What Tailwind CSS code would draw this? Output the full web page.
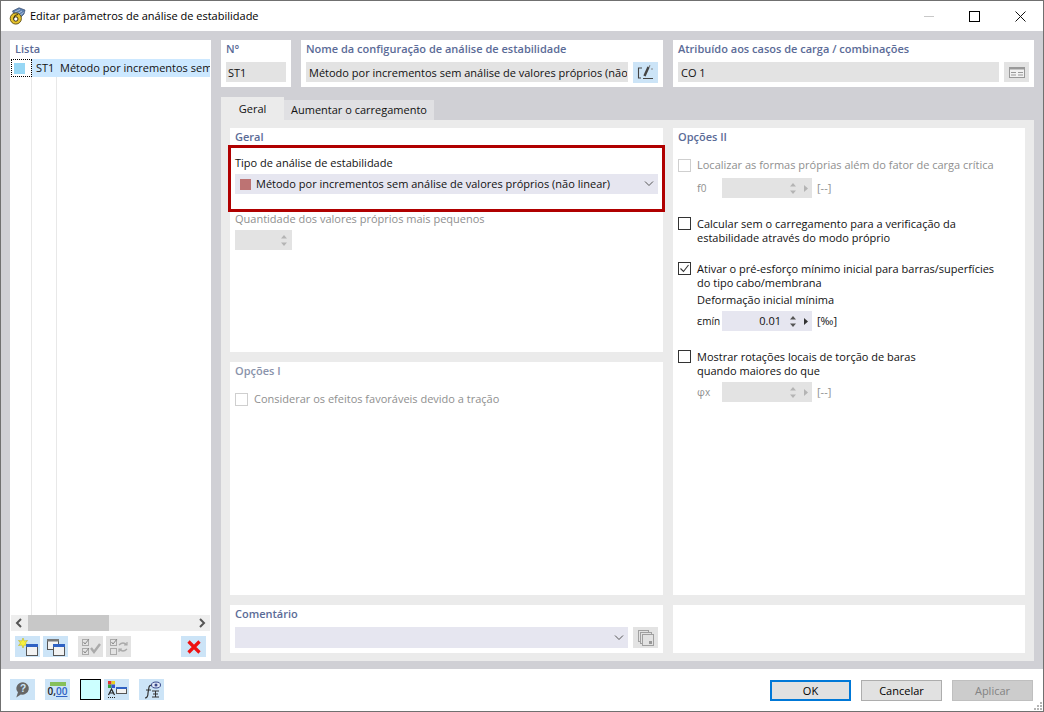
<!DOCTYPE html>
<html lang="pt">
<head>
<meta charset="UTF-8">
<title>Editar parâmetros de análise de estabilidade</title>
<script src="https://cdn.jsdelivr.net/npm/@tailwindcss/browser@4"></script>
</head>
<body class="w-[1044px] h-[712px] overflow-hidden bg-white">
<div class="relative w-[1044px] h-[712px] border border-[#707070] flex flex-col font-['Open_Sans',sans-serif] text-[11px] leading-[14px] text-[#111]">

  <!-- barra de titulo -->
  <div class="h-[30px] flex items-center bg-white shrink-0">
    <svg class="ml-[8px] w-[17px] h-[18px]" viewBox="0 0 17 18">
      <path d="M5 7 L3.5 4 L10 .8 L16 3 L15 7 L11 11 Z" fill="#5c7fae" stroke="#3c4f70" stroke-width=".7"/>
      <path d="M6 5 L11 2.5 M8 7 L13 4 M10 9 L14.5 5.5" stroke="#c8d6ea" stroke-width=".8"/>
      <circle cx="6.8" cy="11.5" r="5.6" fill="#e5c22c" stroke="#5a4a10" stroke-width=".9"/>
      <circle cx="6.8" cy="12" r="2.2" fill="#fff" stroke="#3a3010" stroke-width="1"/>
      <path d="M4.6 11.5 Q5 7.5 9 7.5" fill="none" stroke="#3a3010" stroke-width="1"/>
    </svg>
    <span class="ml-[4px] text-black">Editar parâmetros de análise de estabilidade</span>
    <div class="ml-auto flex items-center">
      <div class="w-[10px] h-px bg-[#c8c8c8] mr-[35px]"></div>
      <div class="w-[11px] h-[11px] border border-black mr-[35px]"></div>
      <svg class="w-[11px] h-[11px] mr-[17px]" viewBox="0 0 11 11"><path d="M.5 .5 L10.5 10.5 M10.5 .5 L.5 10.5" stroke="#111" stroke-width="1"/></svg>
    </div>
  </div>

  <!-- corpo -->
  <div class="h-[638px] shrink-0 bg-[#d0d0d5] pl-[9px] pr-[9px] pt-[9px] pb-[8px] flex gap-[10px]">

    <!-- lista -->
    <div class="w-[201px] bg-white flex flex-col shrink-0">
      <div class="h-[19px] pl-[5px] pt-[2px] font-semibold text-[#5b6b97]">Lista</div>
      <div class="h-[556px] relative overflow-hidden">
        <div class="absolute left-[21px] top-0 bottom-0 w-px bg-[#e8e8e8]"></div>
        <div class="absolute left-[46px] top-0 bottom-0 w-px bg-[#e8e8e8]"></div>
        <div class="relative flex h-[18px] ml-px w-[199px]">
          <div class="w-[21px] h-[18px] border border-dotted border-black flex items-center pl-[2px]">
            <div class="w-[11px] h-[11px] bg-[#97d7f5]"></div>
          </div>
          <div class="flex-1 bg-[#cce8ff] flex items-center whitespace-nowrap overflow-hidden">
            <span class="ml-[4px] w-[24px] shrink-0">ST1</span>
            <span>Método por incrementos sem análise de valores próprios (não linear)</span>
          </div>
        </div>
      </div>
      <div class="h-[16px] mx-px bg-[#eeeeee] flex items-center">
        <svg class="w-[17px] h-[16px]" viewBox="0 0 17 16"><path d="M10 4 L6 8 L10 12" fill="none" stroke="#555" stroke-width="2"/></svg>
        <div class="w-[81px] h-[16px] bg-[#c8c8c8]"></div>
        <svg class="ml-auto w-[17px] h-[16px]" viewBox="0 0 17 16"><path d="M7 4 L11 8 L7 12" fill="none" stroke="#555" stroke-width="2"/></svg>
      </div>
      <div class="flex items-center pl-[5px] pt-[5px]">
        <div class="w-[25px] h-[21px] bg-[#cce4f7] flex items-center justify-center">
          <svg class="w-[20px] h-[18px]" viewBox="0 0 20 18"><path d="M5 0 L6.2 3 L9.5 2.5 L7.5 5 L9.5 7.5 L6.2 7 L5 10 L3.8 7 L.5 7.5 L2.5 5 L.5 2.5 L3.8 3 Z" fill="#f6f040" stroke="#b8a800" stroke-width=".5"/><rect x="8.5" y="6.5" width="11" height="11" fill="#f2f2f2" stroke="#555"/><rect x="8" y="6" width="12" height="3" fill="#2f62c4"/></svg>
        </div>
        <div class="ml-[3px] w-[25px] h-[21px] bg-[#cce4f7] flex items-center justify-center">
          <svg class="w-[20px] h-[18px]" viewBox="0 0 20 18"><rect x="1.5" y="1.5" width="11" height="10" fill="#f2f2f2" stroke="#555"/><rect x="1" y="1" width="12" height="2.5" fill="#777"/><rect x="7.5" y="6.5" width="11" height="11" fill="#f2f2f2" stroke="#555"/><rect x="7" y="6" width="12" height="3" fill="#2f62c4"/></svg>
        </div>
        <div class="ml-[10px] w-[25px] h-[21px] bg-[#e3e3e3] flex items-center justify-center">
          <svg class="w-[20px] h-[18px]" viewBox="0 0 20 18"><rect x="1.5" y="1.5" width="6" height="6" fill="none" stroke="#aaa"/><rect x="1.5" y="10.5" width="6" height="6" fill="none" stroke="#aaa"/><path d="M2.5 4 L4 6 L8 1 M2.5 13 L4 15 L8 10" fill="none" stroke="#888"/><path d="M10 10 L13 14 L19 6" fill="none" stroke="#aaa" stroke-width="2.4"/></svg>
        </div>
        <div class="ml-[3px] w-[25px] h-[21px] bg-[#e3e3e3] flex items-center justify-center">
          <svg class="w-[20px] h-[18px]" viewBox="0 0 20 18"><rect x="1.5" y="1.5" width="6" height="6" fill="none" stroke="#aaa"/><rect x="1.5" y="10.5" width="6" height="6" fill="none" stroke="#aaa"/><path d="M2.5 4 L4 6 L8 1" fill="none" stroke="#888"/><path d="M10 7 Q14 3 18 7 M18 4 V7 H15 M18 11 Q14 15 10 11 M10 14 V11 H13" fill="none" stroke="#aaa" stroke-width="1.2"/></svg>
        </div>
        <div class="ml-[50px] w-[25px] h-[21px] bg-[#cce4f7] flex items-center justify-center">
          <svg class="w-[14px] h-[14px]" viewBox="0 0 14 14"><path d="M1.5 1.5 L12.5 12.5 M12.5 1.5 L1.5 12.5" stroke="#ee1111" stroke-width="3.2"/></svg>
        </div>
      </div>
    </div>

    <!-- lado direito -->
    <div class="flex-1 flex flex-col">
      <div class="flex gap-[10px] h-[47px]">
        <div class="w-[70px] bg-white px-[5px] pt-[2px]">
          <div class="h-[20px] font-semibold text-[#5b6b97]">N°</div>
          <div class="h-[20px] bg-[#e3e3e3] flex items-center pl-[2px] pt-[2px]">ST1</div>
        </div>
        <div class="w-[362px] bg-white px-[5px] pt-[2px]">
          <div class="h-[20px] font-semibold text-[#5b6b97] whitespace-nowrap">Nome da configuração de análise de estabilidade</div>
          <div class="flex gap-[5px]">
            <div class="w-[322px] h-[20px] bg-[#e3e3e3] flex items-center pl-[3px] pt-[2px] overflow-hidden whitespace-nowrap"><span class="block w-[318px] overflow-hidden">Método por incrementos sem análise de valores próprios (não linear)</span></div>
            <div class="w-[25px] h-[21px] bg-[#cce4f7] flex items-center justify-center">
              <svg class="w-[17px] h-[15px]" viewBox="0 0 17 15"><path d="M5 3 H1.5 V13 H4 M6 13.5 H16" fill="none" stroke="#444" stroke-width="1.1"/><path d="M7.5 11 L11.5 2" stroke="#444" stroke-width="2.4"/><path d="M12 1 L13 1.5" stroke="#777" stroke-width="2"/><path d="M14 4 H16" stroke="#888"/></svg>
            </div>
          </div>
        </div>
        <div class="w-[361px] bg-white px-[5px] pt-[2px]">
          <div class="h-[20px] font-semibold text-[#5b6b97] whitespace-nowrap">Atribuído aos casos de carga / combinações</div>
          <div class="flex gap-[5px]">
            <div class="w-[321px] h-[20px] bg-[#e3e3e3] flex items-center pl-[3px] pt-[2px]">CO 1</div>
            <div class="w-[25px] h-[20px] bg-[#e3e3e3] flex items-center justify-center">
              <svg class="w-[16px] h-[11px]" viewBox="0 0 16 11"><rect x=".5" y=".5" width="15" height="10" fill="#f2f2f2" stroke="#999"/><rect x="0" y="0" width="16" height="2.5" fill="#999"/><path d="M2 5.5 H7 M9 5.5 H14 M2 8 H7 M9 8 H14" stroke="#999"/></svg>
            </div>
          </div>
        </div>
      </div>

      <!-- separadores -->
      <div class="flex h-[23px] mt-[10px] items-end">
        <div class="w-[63px] h-[23px] bg-[#ebebeb] flex items-center justify-center">Geral</div>
        <div class="w-[150px] h-[20px] bg-[#e0e0e3] flex items-center justify-center">Aumentar o carregamento</div>
      </div>

      <div class="h-[541px] bg-[#ebebeb] pl-[9px] pr-[9px] pt-[8px] pb-[8px] flex gap-[10px]">
        <div class="w-[433px] flex flex-col gap-[10px]">

          <!-- geral -->
          <div class="relative h-[224px] bg-white px-[5px] pt-[2px]">
            <div class="h-[14px] font-semibold text-[#5b6b97]">Geral</div>
            <div class="mt-[12px] h-[14px]">Tipo de análise de estabilidade</div>
            <div class="mt-[4px] h-[20px] bg-[#e6e6f0] flex items-center pl-[5px] pr-[4px]">
              <div class="w-[11px] h-[11px] bg-[#bd7373]"></div>
              <span class="ml-[5px]">Método por incrementos sem análise de valores próprios (não linear)</span>
              <svg class="ml-auto w-[10px] h-[6px]" viewBox="0 0 10 6"><path d="M1 .5 L5 4.5 L9 .5" fill="none" stroke="#555" stroke-width="1"/></svg>
            </div>
            <div class="mt-[18px] h-[14px] text-[#8f8f8f]">Quantidade dos valores próprios mais pequenos</div>
            <div class="mt-[4px] w-[57px] h-[20px] bg-[#e3e3e3] flex items-center justify-end pr-[5px]">
              <svg class="w-[6px] h-[13px]" viewBox="0 0 6 13"><path d="M3 1 L6 4.5 H0 Z M3 12 L0 8.5 H6 Z" fill="#b4b4b4"/></svg>
            </div>
            <div class="absolute left-[-2px] top-[17px] w-[437px] h-[67px] border-[3px] border-[#b00000]"></div>
          </div>

          <!-- opcoes I -->
          <div class="h-[233px] bg-white px-[5px] pt-[2px]">
            <div class="h-[14px] font-semibold text-[#8a93ab]">Opções I</div>
            <div class="mt-[14px] flex items-center text-[#8f8f8f]">
              <div class="w-[13px] h-[13px] border border-[#cfcfcf]"></div>
              <span class="ml-[6px]">Considerar os efeitos favoráveis devido a tração</span>
            </div>
          </div>

          <!-- comentario -->
          <div class="h-[48px] bg-white px-[5px] pt-[2px]">
            <div class="h-[14px] font-semibold text-[#5b6b97]">Comentário</div>
            <div class="mt-[6px] flex gap-[5px]">
              <div class="w-[393px] h-[21px] bg-[#e6e6f0] flex items-center justify-end pr-[4px]">
                <svg class="w-[10px] h-[6px]" viewBox="0 0 10 6"><path d="M1 .5 L5 4.5 L9 .5" fill="none" stroke="#555" stroke-width="1"/></svg>
              </div>
              <div class="w-[25px] h-[21px] bg-[#e3e3e3] flex items-center justify-center">
                <svg class="w-[16px] h-[16px]" viewBox="0 0 16 16"><rect x=".5" y=".5" width="10" height="11" fill="none" stroke="#a0a0a0"/><rect x="2.5" y="2.5" width="11" height="11" fill="#e3e3e3" stroke="#a0a0a0"/><rect x="4.5" y="4.5" width="11" height="11" fill="#e3e3e3" stroke="#a0a0a0"/><rect x="11" y="11" width="3" height="3" fill="#999"/></svg>
              </div>
            </div>
          </div>
        </div>

        <div class="w-[352px] flex flex-col gap-[10px]">
          <!-- opcoes II -->
          <div class="h-[467px] bg-white pl-[5px] pt-[2px]">
            <div class="h-[14px] font-semibold text-[#5b6b97]">Opções II</div>

            <div class="mt-[14px] flex items-center h-[14px] text-[#8f8f8f]">
              <div class="w-[13px] h-[13px] border border-[#cfcfcf]"></div>
              <span class="ml-[6px]">Localizar as formas próprias além do fator de carga crítica</span>
            </div>
            <div class="mt-[6px] flex items-center h-[20px] pl-[19px] text-[#8f8f8f]">
              <span class="w-[25px]">f<span class="text-[10px]">0</span></span>
              <div class="w-[90px] h-[20px] bg-[#e3e3e3] flex items-center justify-end pr-[4px]">
                <svg class="w-[6px] h-[13px]" viewBox="0 0 6 13"><path d="M3 1 L6 4.5 H0 Z M3 12 L0 8.5 H6 Z" fill="#b4b4b4"/></svg>
                <svg class="ml-[8px] w-[4px] h-[7px]" viewBox="0 0 4 7"><path d="M0 0 L4 3.5 L0 7 Z" fill="#b4b4b4"/></svg>
              </div>
              <span class="ml-[5px]">[--]</span>
            </div>

            <div class="mt-[19px] flex">
              <div class="w-[13px] h-[13px] border border-[#333] shrink-0"></div>
              <span class="ml-[6px]">Calcular sem o carregamento para a verificação da<br>estabilidade através do modo próprio</span>
            </div>

            <div class="mt-[17px] flex">
              <div class="w-[13px] h-[13px] border border-[#333] shrink-0 flex items-center justify-center">
                <svg class="w-[11px] h-[11px]" viewBox="0 0 11 11"><path d="M1.5 5.5 L4.5 8.5 L9.5 2" fill="none" stroke="#333" stroke-width="1.1"/></svg>
              </div>
              <span class="ml-[6px]">Ativar o pré-esforço mínimo inicial para barras/superfícies<br>do tipo cabo/membrana</span>
            </div>
            <div class="mt-[3px] pl-[19px] h-[14px]">Deformação inicial mínima</div>
            <div class="mt-[4px] flex items-center h-[20px] pl-[19px]">
              <span class="w-[25px]">ε<span class="text-[10px]">mín</span></span>
              <div class="w-[90px] h-[20px] bg-[#e6e6f0] flex items-center justify-end pr-[4px]">
                <span class="mr-[9px]">0.01</span>
                <svg class="w-[6px] h-[13px]" viewBox="0 0 6 13"><path d="M3 1 L6 4.5 H0 Z M3 12 L0 8.5 H6 Z" fill="#555"/></svg>
                <svg class="ml-[8px] w-[4px] h-[7px]" viewBox="0 0 4 7"><path d="M0 0 L4 3.5 L0 7 Z" fill="#333"/></svg>
              </div>
              <span class="ml-[5px]">[‰]</span>
            </div>

            <div class="mt-[19px] flex">
              <div class="w-[13px] h-[13px] border border-[#333] shrink-0"></div>
              <span class="ml-[6px]">Mostrar rotações locais de torção de baras<br>quando maiores do que</span>
            </div>
            <div class="mt-[4px] flex items-center h-[20px] pl-[19px] text-[#8f8f8f]">
              <span class="w-[25px]">φ<span class="text-[10px]">x</span></span>
              <div class="w-[90px] h-[20px] bg-[#e3e3e3] flex items-center justify-end pr-[4px]">
                <svg class="w-[6px] h-[13px]" viewBox="0 0 6 13"><path d="M3 1 L6 4.5 H0 Z M3 12 L0 8.5 H6 Z" fill="#b4b4b4"/></svg>
                <svg class="ml-[8px] w-[4px] h-[7px]" viewBox="0 0 4 7"><path d="M0 0 L4 3.5 L0 7 Z" fill="#b4b4b4"/></svg>
              </div>
              <span class="ml-[5px]">[--]</span>
            </div>
          </div>
          <div class="h-[48px] bg-white"></div>
        </div>
      </div>
    </div>
  </div>

  <!-- rodape -->
  <div class="relative flex-1 bg-white flex items-start">
    <div class="flex items-center pl-[9px] pt-[10px]">
      <div class="w-[25px] h-[21px] bg-[#cce4f7] flex items-center justify-center">
        <svg class="w-[17px] h-[17px]" viewBox="0 0 15 15"><path d="M8 1 A6 5.5 0 1 1 6 12 L2 14.5 L3.5 10 A6 5.5 0 0 1 8 1 Z" fill="#666"/><text x="8" y="10" text-anchor="middle" font-size="9" font-weight="700" fill="#cce4f7" font-family="Liberation Sans">?</text></svg>
      </div>
      <div class="ml-[10px] w-[25px] h-[21px] bg-[#cce4f7] flex flex-col items-center justify-center">
        <div class="w-[16px] h-[4px] bg-[#86c05a]"></div>
        <div class="text-[10px] leading-[11px] font-semibold"><span class="text-[#222]">0,</span><span class="text-[#2f62c4] underline">00</span></div>
      </div>
      <div class="ml-[10px] w-[21px] h-[21px] bg-[#ccffff] border border-black"></div>
      <div class="ml-[3px] w-[25px] h-[21px] bg-[#cce4f7] flex items-center justify-center">
        <svg class="w-[20px] h-[18px]" viewBox="0 0 20 18"><rect x="1" y="0" width="3.5" height="3.5" fill="#e03030"/><rect x="4.5" y="0" width="3.5" height="3.5" fill="#e8d020"/><rect x="1" y="3.5" width="3.5" height="3.5" fill="#30a040"/><rect x="4.5" y="3.5" width="3.5" height="3.5" fill="#3050d0"/><path d="M1.5 14 L4.5 8 L7.5 14 M3 12 H6" fill="none" stroke="#222" stroke-width="1.2"/><path d="M1 16.5 H8" stroke="#222" stroke-dasharray="1 1"/><rect x="9.5" y="6.5" width="10" height="6" fill="#f2f2f2" stroke="#555"/><rect x="9" y="6" width="11" height="2" fill="#2f62c4"/></svg>
      </div>
      <div class="ml-[10px] w-[25px] h-[21px] bg-[#cce4f7] flex items-center justify-center">
        <svg class="w-[20px] h-[18px]" viewBox="0 0 20 18"><path d="M3 17 Q6 17 6 12 L7 6 Q7.5 4 10 4 M4 9 H9" fill="none" stroke="#333" stroke-width="1.2"/><path d="M10 10 H17 M13.5 10 V16 M10 16 H17 M11 13 L16 13" fill="none" stroke="#333" stroke-width="1"/><ellipse cx="14" cy="4" rx="4.5" ry="3" fill="#dfe6f5" stroke="#3a4a8c"/><circle cx="14" cy="4" r="1.5" fill="#3a4a8c"/></svg>
      </div>
    </div>
    <div class="ml-auto flex gap-[10px] pt-[11px] pr-[10px]">
      <div class="w-[81px] h-[21px] bg-[#e1e1e1] border-2 border-[#0078d7] flex items-center justify-center text-black">OK</div>
      <div class="w-[81px] h-[21px] bg-[#e1e1e1] border border-[#adadad] flex items-center justify-center text-black">Cancelar</div>
      <div class="w-[81px] h-[21px] bg-[#cccccc] border border-[#bfbfbf] flex items-center justify-center text-[#838383]">Aplicar</div>
    </div>
    <svg class="absolute right-0 bottom-0 w-[10px] h-[10px]" viewBox="0 0 10 10"><path d="M7 1 h2 v2 h-2 Z M4 4 h2 v2 h-2 Z M7 4 h2 v2 h-2 Z M1 7 h2 v2 h-2 Z M4 7 h2 v2 h-2 Z M7 7 h2 v2 h-2 Z" fill="#b5b5b5"/></svg>
  </div>
</div>
</body>
</html>
